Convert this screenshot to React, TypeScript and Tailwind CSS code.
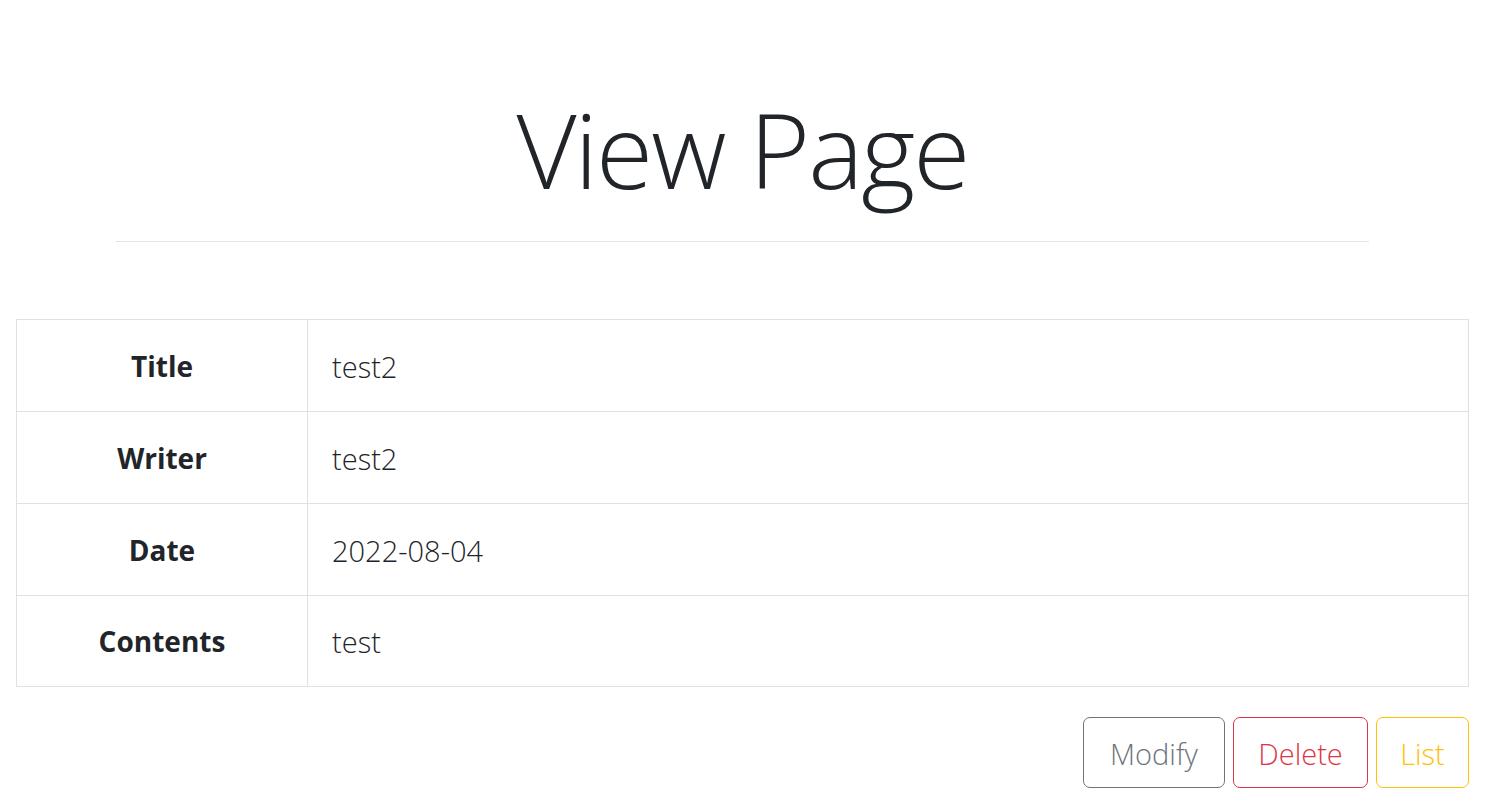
const rows = [
  { label: 'Title', value: 'test2' },
  { label: 'Writer', value: 'test2' },
  { label: 'Date', value: '2022-08-04' },
  { label: 'Contents', value: 'test' },
]

export default function App() {
  return (
    <div
      className="min-h-screen bg-white px-4 text-[#212529]"
      style={{ fontFamily: '"Open Sans", "Noto Sans", sans-serif' }}
    >
      <div className="flex flex-col items-center pt-[87px]">
        <h1 className="text-[104px] leading-[1.2] font-light tracking-[-2px]">View Page</h1>
        <div className="mt-[29px] h-px w-[1253px] bg-[#e3e3e3]" />
      </div>

      <div className="mt-[77px] border border-[#dee2e6]">
        {rows.map((row, i) => (
          <div
            key={row.label}
            className={
              i === rows.length - 1
                ? 'grid h-[90px] grid-cols-[291px_1fr]'
                : 'grid h-[92px] grid-cols-[291px_1fr] border-b border-[#dee2e6]'
            }
          >
            <div className="flex items-center justify-center border-r border-[#dee2e6] pt-[2px] text-[28px] leading-[45px] font-bold">
              {row.label}
            </div>
            <div className="flex items-center pt-[2px] pl-6 text-[29px] leading-[45px] font-light">
              {row.value}
            </div>
          </div>
        ))}
      </div>

      <div className="mt-[30px] flex justify-end gap-2">
        <button className="h-[71px] w-[142px] rounded-[7px] border border-[#6c757d] pt-[3px] text-[29px] font-light text-[#6c757d]">
          Modify
        </button>
        <button className="h-[71px] w-[135px] rounded-[7px] border border-[#dc3545] pt-[3px] text-[29px] font-light text-[#dc3545]">
          Delete
        </button>
        <button className="h-[71px] w-[93px] rounded-[7px] border border-[#ffc107] pt-[3px] text-[29px] font-light text-[#ffc107]">
          List
        </button>
      </div>
    </div>
  )
}
